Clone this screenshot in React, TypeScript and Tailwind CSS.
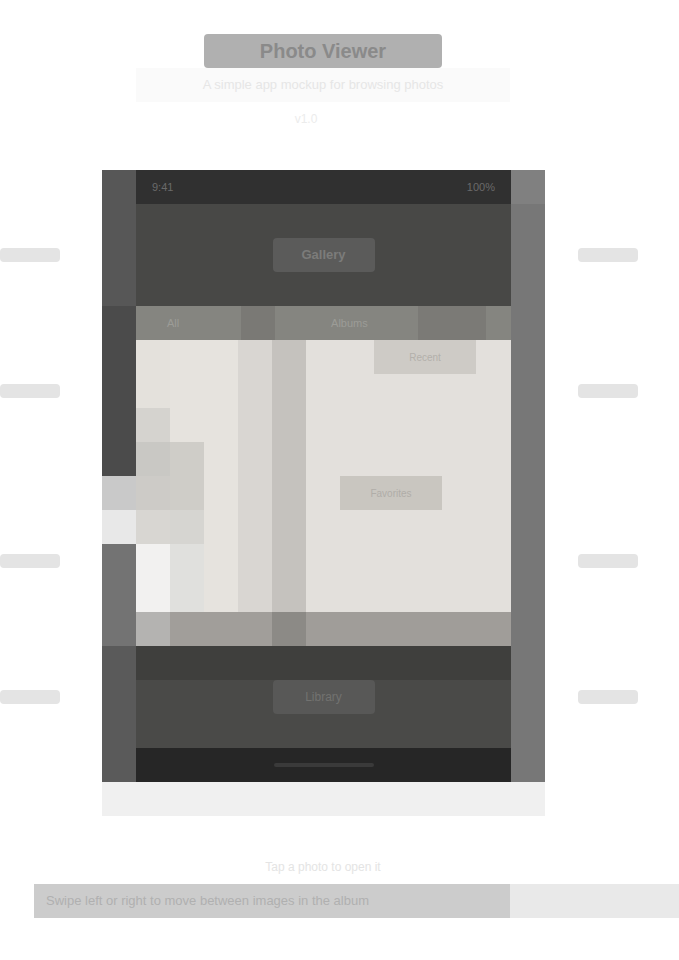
import React from "react"

const font = { fontFamily: '"Liberation Sans", Arial, sans-serif' }

// faint annotation marks either side of the device
function SideMarks({ align }: { align: "left" | "right" }) {
  const rows = [68, 102, 136, 102]
  return (
    <div className={`flex flex-col ${align === "left" ? "items-start" : "items-start pl-[33px]"}`}>
      {rows.map((gap, i) => (
        <div key={i} style={{ marginTop: gap }} className="h-[34px] w-[68px] flex items-center">
          <div className="h-[14px] w-[60px] rounded-sm bg-[#e4e4e4]" />
        </div>
      ))}
    </div>
  )
}

function Bezel({ side }: { side: "left" | "right" }) {
  if (side === "right") {
    return (
      <div className="w-[34px] flex flex-col">
        <div className="h-[34px] bg-[#808080]" />
        <div className="flex-1 bg-[#777777]" />
      </div>
    )
  }
  return (
    <div className="w-[34px] flex flex-col">
      <div className="h-[136px] bg-[#575757]" />
      <div className="h-[170px] bg-[#4b4b4b]" />
      <div className="h-[34px] bg-[#c9c9c9]" />
      <div className="h-[34px] bg-[#e8e8e8]" />
      <div className="h-[102px] bg-[#737373]" />
      <div className="flex-1 bg-[#5a5a5a]" />
    </div>
  )
}

function Screen() {
  return (
    <div className="w-[375px] flex flex-col">
      {/* status bar */}
      <div className="h-[34px] bg-[#303030] flex items-center justify-between px-4 text-[11px] text-[#6a6a6a]">
        <span>9:41</span>
        <span>100%</span>
      </div>
      {/* nav header */}
      <div className="h-[102px] bg-[#484846] flex items-center justify-center">
        <div className="h-[34px] w-[102px] rounded bg-[#5b5b5a] flex items-center justify-center text-[13px] font-bold text-[#7c7c7a]">
          Gallery
        </div>
      </div>
      {/* tabs */}
      <div className="h-[34px] bg-[#858580] flex text-[11px] text-[#9c9c97]">
        <div className="w-[170px] flex items-center justify-around">
          <span>All</span>
          <span className="h-full w-[34px] bg-[#7a7975]" />
        </div>
        <div className="flex-1 flex items-center justify-around">
          <span>Albums</span>
          <span className="h-full w-[68px] bg-[#7b7a76]" />
        </div>
      </div>
      {/* content */}
      <div className="h-[272px] bg-[#e3e0dc] flex">
        <div className="w-[170px] flex">
          <div className="w-[34px] flex flex-col">
            <div className="h-[68px] bg-[#e4e1dc]" />
            <div className="h-[34px] bg-[#d5d3cf]" />
            <div className="h-[34px] bg-[#c9c8c4]" />
            <div className="h-[34px] bg-[#cdcbc7]" />
            <div className="h-[34px] bg-[#d8d6d2]" />
            <div className="flex-1 bg-[#f2f1f0]" />
          </div>
          <div className="w-[34px] flex flex-col">
            <div className="h-[102px] bg-[#e6e3de]" />
            <div className="h-[68px] bg-[#cfcdc8]" />
            <div className="h-[34px] bg-[#d6d5d1]" />
            <div className="flex-1 bg-[#e0e0dd]" />
          </div>
          <div className="w-[34px] bg-[#e6e3de]" />
          <div className="w-[34px] bg-[#d9d6d2]" />
          <div className="w-[34px] bg-[#c5c2be]" />
        </div>
        <div className="flex-1 flex flex-col">
          <div className="h-[34px] flex">
            <div className="w-[68px]" />
            <div className="w-[102px] bg-[#cecbc6] flex items-center justify-center text-[10px] text-[#b3b0ab]">
              Recent
            </div>
          </div>
          <div className="h-[102px]" />
          <div className="h-[34px] flex">
            <div className="w-[34px]" />
            <div className="w-[102px] bg-[#c9c6c0] flex items-center justify-center text-[10px] text-[#b0ada8]">
              Favorites
            </div>
          </div>
          <div className="flex-1" />
        </div>
      </div>
      {/* bottom toolbar */}
      <div className="h-[34px] bg-[#a09d99] flex">
        <div className="w-[34px] bg-[#b4b3b1]" />
        <div className="w-[102px] bg-[#a19e9a]" />
        <div className="w-[34px] bg-[#8c8a86]" />
        <div className="flex-1" />
      </div>
      {/* tab bar */}
      <div className="h-[34px] bg-[#3f3f3d]" />
      <div className="h-[68px] bg-[#4a4a48] flex items-start justify-center">
        <div className="h-[34px] w-[102px] rounded bg-[#585857] flex items-center justify-center text-[12px] text-[#727270]">
          Library
        </div>
      </div>
      {/* home indicator */}
      <div className="h-[34px] bg-[#262626] flex items-center justify-center">
        <div className="h-[4px] w-[100px] rounded-full bg-[#3a3a3a]" />
      </div>
    </div>
  )
}

export default function App() {
  return (
    <div className="w-[679px] h-[960px] bg-white overflow-hidden flex flex-col" style={font}>
      {/* heading */}
      <div className="pt-[34px] flex flex-col items-start">
        <div className="ml-[204px] h-[34px] w-[238px] rounded-sm bg-[#b0b0b0] flex items-center justify-center text-[20px] font-bold text-[#8a8a8a]">
          Photo Viewer
        </div>
        <div className="ml-[136px] h-[34px] w-[374px] flex items-center justify-center text-[13px] text-[#e6e6e6] bg-[#fafafa]">
          A simple app mockup for browsing photos
        </div>
        <div className="ml-[272px] h-[34px] w-[68px] flex items-center justify-center text-[12px] text-[#ececec]">
          v1.0
        </div>
      </div>

      {/* device row */}
      <div className="mt-[34px] flex items-start">
        <div className="w-[102px]">
          <SideMarks align="left" />
        </div>
        <div className="flex h-[612px]">
          <Bezel side="left" />
          <Screen />
          <Bezel side="right" />
        </div>
        <div className="flex-1">
          <SideMarks align="right" />
        </div>
      </div>

      {/* device base */}
      <div className="ml-[102px] w-[443px] h-[34px] bg-[#f0f0f0]" />

      {/* caption */}
      <div className="mt-[34px] h-[34px] ml-[136px] w-[374px] flex items-center justify-center text-[12px] text-[#e4e4e4]">
        Tap a photo to open it
      </div>
      <div className="h-[34px] flex">
        <div className="ml-[34px] w-[476px] bg-[#cccccc] flex items-center px-3 text-[13px] text-[#b0b0b0]">
          Swipe left or right to move between images in the album
        </div>
        <div className="flex-1 bg-[#e9e9e9]" />
      </div>
    </div>
  )
}
